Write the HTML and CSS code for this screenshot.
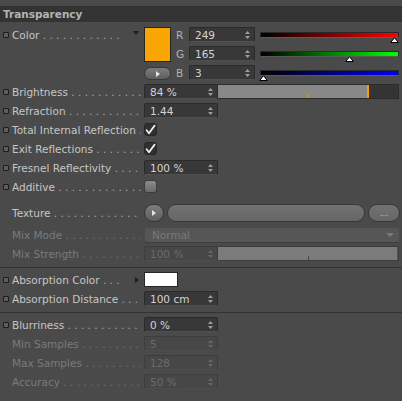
FILE: index.html
```html
<!DOCTYPE html>
<html>
<head>
<meta charset="utf-8">
<link rel="stylesheet" href="styles.css">
</head>
<body>
<div class="hdr">Transparency</div>
<div class="content">

  <div class="color-row">
    <div class="lbl top"><i class="ani"></i><span class="txt">Color</span><span class="dots"></span><span class="tri-down"></span></div>
    <div class="cgrid">
      <div class="swatch orange"></div>
      <span class="ch">R</span>
      <div class="fld fld-c"><span>249</span><svg class="spin" width="5" height="10" viewBox="0 0 5 10"><path d="M0 4L2.5 1L5 4Z M0 6L2.5 9L5 6Z"/></svg></div>
      <div class="slider red"><svg class="thumb" style="left:calc(97.2% - 4.5px)" width="9" height="6" viewBox="0 0 9 6"><path d="M4.5 0.7L8.3 5.5L0.7 5.5Z"/></svg></div>
      <span class="ch">G</span>
      <div class="fld fld-c"><span>165</span><svg class="spin" width="5" height="10" viewBox="0 0 5 10"><path d="M0 4L2.5 1L5 4Z M0 6L2.5 9L5 6Z"/></svg></div>
      <div class="slider green"><svg class="thumb" style="left:calc(64.7% - 4.5px)" width="9" height="6" viewBox="0 0 9 6"><path d="M4.5 0.7L8.3 5.5L0.7 5.5Z"/></svg></div>
      <button class="pbtn"><svg width="4" height="6" viewBox="0 0 4 6"><path d="M0 0L4 3L0 6Z"/></svg></button>
      <span class="ch">B</span>
      <div class="fld fld-c"><span>3</span><svg class="spin" width="5" height="10" viewBox="0 0 5 10"><path d="M0 4L2.5 1L5 4Z M0 6L2.5 9L5 6Z"/></svg></div>
      <div class="slider blue"><svg class="thumb" style="left:calc(2% - 4.5px)" width="9" height="6" viewBox="0 0 9 6"><path d="M4.5 0.7L8.3 5.5L0.7 5.5Z"/></svg></div>
    </div>
  </div>

  <div class="row">
    <div class="lbl"><i class="ani"></i><span class="txt">Brightness</span><span class="dots"></span></div>
    <div class="fld"><span>84 %</span><svg class="spin" width="5" height="10" viewBox="0 0 5 10"><path d="M0 4L2.5 1L5 4Z M0 6L2.5 9L5 6Z"/></svg></div>
    <div class="bar"><div class="fill" style="width:84%"></div><i class="tick"></i></div>
  </div>

  <div class="row">
    <div class="lbl"><i class="ani"></i><span class="txt">Refraction</span><span class="dots"></span></div>
    <div class="fld"><span>1.44</span><svg class="spin" width="5" height="10" viewBox="0 0 5 10"><path d="M0 4L2.5 1L5 4Z M0 6L2.5 9L5 6Z"/></svg></div>
  </div>

  <div class="row">
    <div class="lbl"><i class="ani"></i><span class="txt">Total Internal Reflection</span><span class="dots"></span></div>
    <div class="chk"><svg width="11" height="11" viewBox="0 0 11 11"><path d="M1.6 6.2L4 9.2L9.6 1.6"/></svg></div>
  </div>

  <div class="row">
    <div class="lbl"><i class="ani"></i><span class="txt">Exit Reflections</span><span class="dots"></span></div>
    <div class="chk"><svg width="11" height="11" viewBox="0 0 11 11"><path d="M1.6 6.2L4 9.2L9.6 1.6"/></svg></div>
  </div>

  <div class="row">
    <div class="lbl"><i class="ani"></i><span class="txt">Fresnel Reflectivity</span><span class="dots"></span></div>
    <div class="fld"><span>100 %</span><svg class="spin" width="5" height="10" viewBox="0 0 5 10"><path d="M0 4L2.5 1L5 4Z M0 6L2.5 9L5 6Z"/></svg></div>
  </div>

  <div class="row">
    <div class="lbl"><i class="ani"></i><span class="txt">Additive</span><span class="dots"></span></div>
    <div class="chk off"></div>
  </div>

  <div class="row tex">
    <div class="lbl plain"><span class="txt">Texture</span><span class="dots"></span></div>
    <button class="rbtn"><svg width="4" height="6" viewBox="0 0 4 6"><path d="M0 0L4 3L0 6Z"/></svg></button>
    <div class="linkbar"></div>
    <button class="more">...</button>
  </div>

  <div class="row">
    <div class="lbl plain dim"><span class="txt">Mix Mode</span><span class="dots"></span></div>
    <div class="select"><span>Normal</span><i class="tri-sel"></i></div>
  </div>

  <div class="row">
    <div class="lbl plain dim"><span class="txt">Mix Strength</span><span class="dots"></span></div>
    <div class="fld dis"><span>100 %</span><svg class="spin" width="5" height="10" viewBox="0 0 5 10"><path d="M0 4L2.5 1L5 4Z M0 6L2.5 9L5 6Z"/></svg></div>
    <div class="bar dis"><div class="fill" style="width:100%"></div><i class="tick"></i></div>
  </div>

  <div class="sep"></div>

  <div class="row">
    <div class="lbl"><i class="ani"></i><span class="txt">Absorption Color</span><span class="dots"></span><span class="tri-right"></span></div>
    <div class="swatch white"></div>
  </div>

  <div class="row">
    <div class="lbl"><i class="ani"></i><span class="txt">Absorption Distance</span><span class="dots"></span></div>
    <div class="fld"><span>100 cm</span><svg class="spin" width="5" height="10" viewBox="0 0 5 10"><path d="M0 4L2.5 1L5 4Z M0 6L2.5 9L5 6Z"/></svg></div>
  </div>

  <div class="sep"></div>

  <div class="row">
    <div class="lbl"><i class="ani"></i><span class="txt">Blurriness</span><span class="dots"></span></div>
    <div class="fld"><span>0 %</span><svg class="spin" width="5" height="10" viewBox="0 0 5 10"><path d="M0 4L2.5 1L5 4Z M0 6L2.5 9L5 6Z"/></svg></div>
  </div>

  <div class="row">
    <div class="lbl plain dim"><span class="txt">Min Samples</span><span class="dots"></span></div>
    <div class="fld dis"><span>5</span><svg class="spin" width="5" height="10" viewBox="0 0 5 10"><path d="M0 4L2.5 1L5 4Z M0 6L2.5 9L5 6Z"/></svg></div>
  </div>

  <div class="row">
    <div class="lbl plain dim"><span class="txt">Max Samples</span><span class="dots"></span></div>
    <div class="fld dis"><span>128</span><svg class="spin" width="5" height="10" viewBox="0 0 5 10"><path d="M0 4L2.5 1L5 4Z M0 6L2.5 9L5 6Z"/></svg></div>
  </div>

  <div class="row">
    <div class="lbl plain dim"><span class="txt">Accuracy</span><span class="dots"></span></div>
    <div class="fld dis"><span>50 %</span><svg class="spin" width="5" height="10" viewBox="0 0 5 10"><path d="M0 4L2.5 1L5 4Z M0 6L2.5 9L5 6Z"/></svg></div>
  </div>

</div>
</body>
</html>
```
FILE: styles.css
```css
* { box-sizing: border-box; }
html, body { margin: 0; padding: 0; }
body {
  background: #4a4a4a;
  font-family: "DejaVu Sans", "Liberation Sans", sans-serif;
  font-size: 10.5px;
  color: #c6c6c6;
  width: 402px;
  height: 401px;
  overflow: hidden;
}
button { font-family: inherit; padding: 0; margin: 0; cursor: default; }

.hdr {
  margin-top: 6px;
  height: 16px;
  line-height: 16px;
  background: #333;
  color: #b3b3b3;
  font-weight: bold;
  padding-left: 3px;
}
.content { padding-top: 3px; }

.row {
  display: flex;
  align-items: center;
  height: 19px;
  padding-right: 3px;
}

.lbl {
  flex: none;
  width: 144px;
  height: 19px;
  display: flex;
  align-items: center;
  padding-left: 3px;
  padding-right: 3px;
  white-space: nowrap;
  overflow: hidden;
}
.lbl.plain { padding-left: 12px; }
.lbl.dim { color: #7a7a7a; }
.txt { flex: none; }
.ani {
  flex: none;
  width: 6px;
  height: 6px;
  border: 1px solid #1c1c1c;
  background: #5e5e5e;
  border-radius: 1px;
  margin-right: 3px;
}
.dots {
  flex: 1;
  min-width: 0;
  overflow: hidden;
  color: #a8a8a8;
  white-space: pre;
}
.lbl.dim .dots { color: #727272; }
.dots::before { content: " . . . . . . . . . . . . . . . . . . . . . . . . . . . . . ."; }

.tri-down {
  flex: none;
  align-self: flex-start;
  margin-top: 6px;
  margin-left: 12px;
  margin-right: 2px;
  width: 0; height: 0;
  border-left: 3px solid transparent;
  border-right: 3px solid transparent;
  border-top: 4px solid #1e1e1e;
}
.tri-right {
  flex: none;
  margin-left: 16px;
  margin-right: 2px;
  width: 0; height: 0;
  border-top: 3px solid transparent;
  border-bottom: 3px solid transparent;
  border-left: 4px solid #1e1e1e;
}

/* colour block */
.color-row { display: flex; align-items: flex-start; }
.cgrid {
  flex: 1;
  display: grid;
  grid-template-columns: 27px 18px 66px 1fr;
  grid-template-rows: 19px 19px 19px;
  padding-right: 3px;
}
.swatch { border: 1px solid #262626; }
.swatch.orange {
  grid-column: 1;
  grid-row: 1 / 3;
  margin-top: 2px;
  height: 35px;
  background: #f9a503;
}
.swatch.white {
  align-self: flex-start;
  margin-top: 2px;
  width: 34px;
  height: 15px;
  background: #fff;
}
.ch { align-self: center; padding-left: 5px; color: #b2b2b2; }
.pbtn {
  grid-column: 1;
  grid-row: 3;
  align-self: start;
  margin-top: 4px;
  height: 13px;
  border-radius: 7px;
  border: 1px solid #363636;
  background: linear-gradient(#7c7c7c, #5e5e5e);
  display: flex;
  align-items: center;
  justify-content: center;
}
.pbtn svg, .rbtn svg { fill: #e4e4e4; }

.slider {
  position: relative;
  align-self: start;
  margin-top: 7px;
  margin-left: 5px;
  height: 6px;
  border: 1px solid #2a2a2a;
  border-bottom-color: #5a5a5a;
}
.slider.red { background: linear-gradient(to right, #000, #ff0000); }
.slider.green { background: linear-gradient(to right, #000, #00ff00); }
.slider.blue { background: linear-gradient(to right, #000, #0000ff); }
.thumb { position: absolute; top: 4px; }
.thumb path { fill: #fff; stroke: #000; stroke-width: 1; }

/* fields */
.fld {
  flex: none;
  width: 74px;
  height: 15px;
  display: flex;
  align-items: center;
  justify-content: space-between;
  padding: 0 4px 0 5px;
  background: #383838;
  border: 1px solid #2a2a2a;
  border-bottom-color: #4f4f4f;
  border-radius: 2px;
  color: #d4d4d4;
}
.fld.fld-c { width: 66px; align-self: center; }
.spin { fill: #9c9c9c; }
.fld.dis {
  background: #474747;
  border-color: #3d3d3d;
  border-bottom-color: #4e4e4e;
  color: #6c6c6c;
}
.fld.dis .spin { fill: #666; }

.bar {
  flex: 1;
  height: 15px;
  position: relative;
  display: flex;
  background: #343434;
  border: 1px solid #2b2b2b;
  border-left: none;
}
.fill {
  height: 100%;
  background: #888;
  border-right: 2px solid #f4a000;
}
.tick {
  position: absolute;
  left: 50%;
  bottom: 0;
  width: 1px;
  height: 4px;
  background: #d9951e;
}
.bar.dis { background: #7b7b7b; border-color: #3d3d3d; }
.bar.dis .fill { background: #7b7b7b; border-right: 1px solid #555; }
.bar.dis .tick { background: #4a4a4a; }

/* checkboxes */
.chk {
  flex: none;
  width: 13px;
  height: 13px;
  border-radius: 3px;
  background: #303030;
  border: 1px solid #262626;
  display: flex;
  align-items: center;
  justify-content: center;
}
.chk svg path { fill: none; stroke: #ececec; stroke-width: 1.8; stroke-linecap: round; stroke-linejoin: round; }
.chk.off {
  background: linear-gradient(#8b8b8b, #6b6b6b);
  border-color: #3c3c3c;
}

/* texture row */
.row.tex { height: 29px; align-items: flex-end; padding-bottom: 3px; }
.row.tex .lbl { height: 18px; }
.rbtn {
  flex: none;
  width: 20px;
  height: 18px;
  border-radius: 9px;
  border: 1px solid #363636;
  background: linear-gradient(#7c7c7c, #5f5f5f);
  display: flex;
  align-items: center;
  justify-content: center;
}
.linkbar {
  flex: 1;
  height: 18px;
  margin-left: 3px;
  border-radius: 9px;
  border: 1px solid #383838;
  background: linear-gradient(#727272, #666);
}
.more {
  flex: none;
  width: 32px;
  height: 18px;
  margin-left: 3px;
  margin-right: -1px;
  border-radius: 9px;
  border: 1px solid #383838;
  background: linear-gradient(#727272, #666);
  color: #c8c8c8;
  font-size: 9px;
  line-height: 16px;
  display: flex;
  align-items: center;
  justify-content: center;
}

/* dropdown */
.select {
  flex: 1;
  align-self: flex-start;
  margin-top: 2px;
  margin-right: -1px;
  height: 16px;
  display: flex;
  align-items: center;
  justify-content: space-between;
  padding: 0 5px 0 7px;
  background: #565656;
  border: 1px solid #4b4b4b;
  border-bottom-color: #3e3e3e;
  border-radius: 3px;
  color: #7a7a7a;
}
.tri-sel {
  width: 0; height: 0;
  border-left: 4px solid transparent;
  border-right: 4px solid transparent;
  border-top: 4px solid #7a7a7a;
}

.sep { height: 1px; background: #333; margin: 4px 0 2px; }
```
